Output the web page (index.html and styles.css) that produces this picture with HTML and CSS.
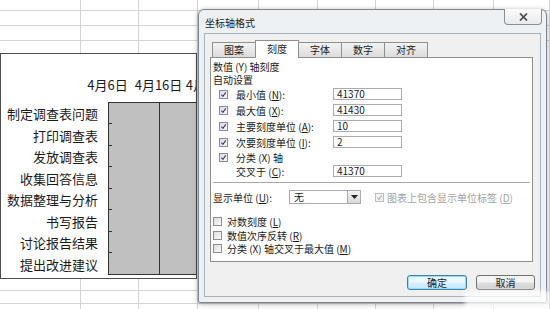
FILE: index.html
```html
<!DOCTYPE html>
<html lang="zh">
<head>
    <meta charset="UTF-8">
    <title>坐标轴格式</title>
    <link rel="stylesheet" href="styles.css">
</head>
<body>
    <div class="sheet">
        <div class="chart">
            <div class="dates">
                <span>4月6日</span>
                <span>4月16日</span>
                <span>4月26日</span>
            </div>
            <div class="chart-body">
                <ul class="cats">
                    <li>制定调查表问题</li>
                    <li>打印调查表</li>
                    <li>发放调查表</li>
                    <li>收集回答信息</li>
                    <li>数据整理与分析</li>
                    <li>书写报告</li>
                    <li>讨论报告结果</li>
                    <li>提出改进建议</li>
                </ul>
                <div class="plot"></div>
            </div>
        </div>

        <div class="dialog">
            <div class="titlebar">
                坐标轴格式
                <div class="close">
                    <svg width="9" height="8" viewBox="0 0 9 8"><path d="M1 0.5 L8 7.5 M8 0.5 L1 7.5" stroke="#4a4a4a" stroke-width="1.7" fill="none"/></svg>
                </div>
            </div>
            <div class="client">
                <div class="tabs">
                    <div class="tab">图案</div>
                    <div class="tab active">刻度</div>
                    <div class="tab">字体</div>
                    <div class="tab">数字</div>
                    <div class="tab">对齐</div>
                </div>
                <div class="panel">
                    <div class="heading">数值 (Y) 轴刻度<br>自动设置</div>

                    <div class="row">
                        <span class="cb on"><svg viewBox="0 0 9 9"><path d="M1.8 4.6 L3.8 6.8 L7.4 1.8"/></svg></span>
                        <span class="label">最小值 (<u>N</u>):</span>
                        <span class="field">41370</span>
                    </div>
                    <div class="row">
                        <span class="cb on"><svg viewBox="0 0 9 9"><path d="M1.8 4.6 L3.8 6.8 L7.4 1.8"/></svg></span>
                        <span class="label">最大值 (<u>X</u>):</span>
                        <span class="field">41430</span>
                    </div>
                    <div class="row">
                        <span class="cb on"><svg viewBox="0 0 9 9"><path d="M1.8 4.6 L3.8 6.8 L7.4 1.8"/></svg></span>
                        <span class="label">主要刻度单位 (<u>A</u>):</span>
                        <span class="field">10</span>
                    </div>
                    <div class="row">
                        <span class="cb on"><svg viewBox="0 0 9 9"><path d="M1.8 4.6 L3.8 6.8 L7.4 1.8"/></svg></span>
                        <span class="label">次要刻度单位 (<u>I</u>):</span>
                        <span class="field">2</span>
                    </div>
                    <div class="row short">
                        <span class="cb on"><svg viewBox="0 0 9 9"><path d="M1.8 4.6 L3.8 6.8 L7.4 1.8"/></svg></span>
                        <span class="label">分类 (X) 轴</span>
                    </div>
                    <div class="row short indent">
                        <span class="label">交叉于 (<u>C</u>):</span>
                        <span class="field">41370</span>
                    </div>

                    <div class="sep"></div>

                    <div class="unit-row">
                        <span class="unit-label">显示单位 (<u>U</u>):</span>
                        <div class="select">
                            <span class="select-text">无</span>
                            <span class="select-btn"><svg width="7" height="4" viewBox="0 0 7 4"><path d="M0 0 H7 L3.5 4 Z" fill="#222"/></svg></span>
                        </div>
                        <span class="cb on off"><svg viewBox="0 0 9 9"><path d="M1.8 4.6 L3.8 6.8 L7.4 1.8"/></svg></span>
                        <span class="muted">图表上包含显示单位标签 (<u>D</u>)</span>
                    </div>

                    <div class="opts">
                        <div class="opt"><span class="cb"></span><span>对数刻度 (<u>L</u>)</span></div>
                        <div class="opt"><span class="cb"></span><span>数值次序反转 (<u>R</u>)</span></div>
                        <div class="opt"><span class="cb"></span><span>分类 (X) 轴交叉于最大值 (<u>M</u>)</span></div>
                    </div>
                </div>
                <div class="buttons">
                    <div class="btn default">确定</div>
                    <div class="btn">取消</div>
                </div>
            </div>
        </div>

        <div class="watermark"></div>
    </div>
</body>
</html>
```

FILE: styles.css
```css
* {
    margin: 0;
    padding: 0;
    box-sizing: border-box;
}

body {
    width: 550px;
    height: 309px;
    overflow: hidden;
    background: #fff;
    font-family: "Noto Sans CJK SC", "DejaVu Sans", sans-serif;
    color: #1a1a1a;
}

u {
    text-decoration: underline;
}

/* spreadsheet gridlines behind everything */
.sheet {
    position: relative;
    width: 550px;
    height: 309px;
    background:
        linear-gradient(#d4d4d4, #d4d4d4) 0 10px / 100% 1px no-repeat,
        linear-gradient(#d4d4d4, #d4d4d4) 0 25px / 100% 1px no-repeat,
        linear-gradient(#d4d4d4, #d4d4d4) 0 40px / 100% 1px no-repeat,
        linear-gradient(#d4d4d4, #d4d4d4) 0 290px / 100% 1px no-repeat,
        linear-gradient(#d4d4d4, #d4d4d4) 0 303px / 100% 1px no-repeat,
        linear-gradient(#d4d4d4, #d4d4d4) 80px 0 / 1px 100% no-repeat,
        linear-gradient(#d4d4d4, #d4d4d4) 138px 0 / 1px 100% no-repeat,
        linear-gradient(#d4d4d4, #d4d4d4) 197px 0 / 1px 100% no-repeat,
        linear-gradient(#d4d4d4, #d4d4d4) 258px 0 / 1px 100% no-repeat,
        linear-gradient(#d4d4d4, #d4d4d4) 317px 0 / 1px 100% no-repeat,
        linear-gradient(#d4d4d4, #d4d4d4) 375px 0 / 1px 100% no-repeat,
        linear-gradient(#d4d4d4, #d4d4d4) 433px 0 / 1px 100% no-repeat,
        linear-gradient(#d4d4d4, #d4d4d4) 493px 0 / 1px 100% no-repeat,
        linear-gradient(#d4d4d4, #d4d4d4) 549px 0 / 1px 100% no-repeat,
        #fff;
}

/* gantt chart object */
.chart {
    position: absolute;
    left: 0;
    top: 53px;
    width: 197px;
    height: 226px;
    border: 1px solid #4d4d4d;
    background: #fff;
    overflow: hidden;
}

.dates {
    display: flex;
    height: 48px;
    padding: 23px 0 0 81px;
    font-size: 13px;
    line-height: 16px;
    white-space: nowrap;
}

.dates span {
    flex: 0 0 51px;
    text-align: center;
}

.chart-body {
    display: grid;
    grid-template-columns: 107px 1fr;
    height: 172px;
}

.cats {
    list-style: none;
    padding-top: 1px;
}

.cats li {
    height: 21.5px;
    line-height: 21.5px;
    padding-right: 10px;
    text-align: right;
    font-size: 13px;
    white-space: nowrap;
}

.plot {
    position: relative;
    border: 1px solid #333;
    border-right: none;
    background: #c0c0c0 linear-gradient(#333, #333) 50px 0 / 1px 100% no-repeat;
}

.plot::before {
    content: "";
    position: absolute;
    left: 0;
    top: 0;
    width: 3px;
    height: 100%;
    background: repeating-linear-gradient(to bottom, transparent 0 20.5px, #333 20.5px 21.5px);
}

/* dialog window */
.dialog {
    position: absolute;
    left: 198px;
    top: 9px;
    width: 349px;
    height: 294px;
    display: flex;
    flex-direction: column;
    padding: 0 5px 5px;
    border: 1px solid #7d8791;
    border-radius: 6px 6px 2px 2px;
    background: #eef1f4;
    box-shadow: 0 1px 5px rgba(0, 0, 0, 0.35);
}

.titlebar {
    position: relative;
    height: 23px;
    padding: 7px 0 0 1px;
    font-size: 10px;
    line-height: 12px;
    color: #222;
}

.close {
    position: absolute;
    right: -1px;
    top: -1px;
    width: 38px;
    height: 16px;
    display: flex;
    align-items: center;
    justify-content: center;
    border: 1px solid #8a8f96;
    border-top: none;
    border-radius: 0 0 4px 4px;
    background: linear-gradient(#fbfbfb, #e8eaec);
}

.client {
    flex: 1;
    padding: 6px 7px 0 5px;
    border: 1px solid #a9b0b8;
    background: #f0f0f0;
}

.tabs {
    display: flex;
    align-items: flex-end;
    height: 17px;
    padding-left: 2px;
}

.tab {
    width: 44px;
    height: 15px;
    margin-right: -1px;
    border: 1px solid #8e8f8f;
    border-bottom: none;
    background: linear-gradient(#f3f3f3, #dcdcdc);
    font-size: 10px;
    line-height: 14px;
    text-align: center;
}

.tab.active {
    position: relative;
    z-index: 1;
    height: 18px;
    margin-bottom: -1px;
    background: #fff;
    line-height: 16px;
}

.panel {
    height: 205px;
    padding: 3px 2px 0 2px;
    border: 1px solid #8e8f8f;
    background: #fff;
    font-size: 10px;
    white-space: nowrap;
}

.heading {
    height: 25px;
    line-height: 12.5px;
}

.row {
    display: flex;
    align-items: center;
    height: 16px;
}

.row.short {
    height: 14px;
}

.row.indent {
    padding-left: 23px;
}

.row .cb {
    margin-left: 6px;
}

.label {
    width: 97px;
    margin-left: 8px;
}

.row.indent .label {
    margin-left: 0;
}

.field {
    width: 69px;
    height: 12px;
    padding-left: 3px;
    border: 1px solid #a9abb2;
    line-height: 10px;
    font-size: 10px;
}

.cb {
    display: inline-flex;
    flex: 0 0 9px;
    width: 9px;
    height: 9px;
    border: 1px solid #8f8f8f;
    background: linear-gradient(135deg, #dcdcdc, #fbfbfb);
}

.cb.on {
    border-color: #8a8aa8;
    background: linear-gradient(135deg, #dcdce8, #f6f6fb);
}

.cb svg {
    width: 7px;
    height: 7px;
}

.cb svg path {
    fill: none;
    stroke: #3d3d55;
    stroke-width: 1.4;
}

.cb.off {
    border-color: #bdbdbd;
    background: #f4f4f4;
}

.cb.off svg path {
    stroke: #b0b0b0;
}

.sep {
    margin-top: 4px;
    border-top: 1px solid #a8a8a8;
}

.unit-row {
    display: flex;
    align-items: center;
    height: 14px;
    margin-top: 7px;
}

.unit-label {
    width: 76px;
}

.select {
    display: flex;
    width: 72px;
    height: 14px;
    border: 1px solid #a9abb2;
}

.select-text {
    flex: 1;
    padding-left: 4px;
    line-height: 12px;
}

.select-btn {
    display: flex;
    align-items: center;
    justify-content: center;
    width: 13px;
    border-left: 1px solid #a9abb2;
    background: linear-gradient(#f4f4f4, #d8d8d8);
}

.unit-row .cb {
    margin-left: 14px;
}

.muted {
    margin-left: 3px;
    color: #a3a3a3;
}

.opts {
    margin-top: 11px;
}

.opt {
    display: flex;
    align-items: center;
    gap: 5px;
    height: 13.5px;
}

.buttons {
    display: flex;
    justify-content: flex-end;
    gap: 9px;
    margin: 13px -2px 0 0;
}

.btn {
    width: 59px;
    height: 15px;
    border: 1px solid #707070;
    border-radius: 3px;
    background: linear-gradient(#f4f4f4 45%, #dddddd 55%, #d2d2d2);
    font-size: 10px;
    line-height: 13px;
    text-align: center;
}

.btn.default {
    width: 60px;
    border-color: #3c7fb1;
    box-shadow: inset 0 0 0 1px #9fdcf3;
    background: linear-gradient(#eaf6fd 45%, #d9f0fc 55%, #bee6fd);
}

/* blurred watermark in the corner */
.watermark {
    position: absolute;
    left: 465px;
    top: 291px;
    width: 85px;
    height: 18px;
    background: rgba(255, 255, 255, 0.75);
    filter: blur(2px);
}
```
